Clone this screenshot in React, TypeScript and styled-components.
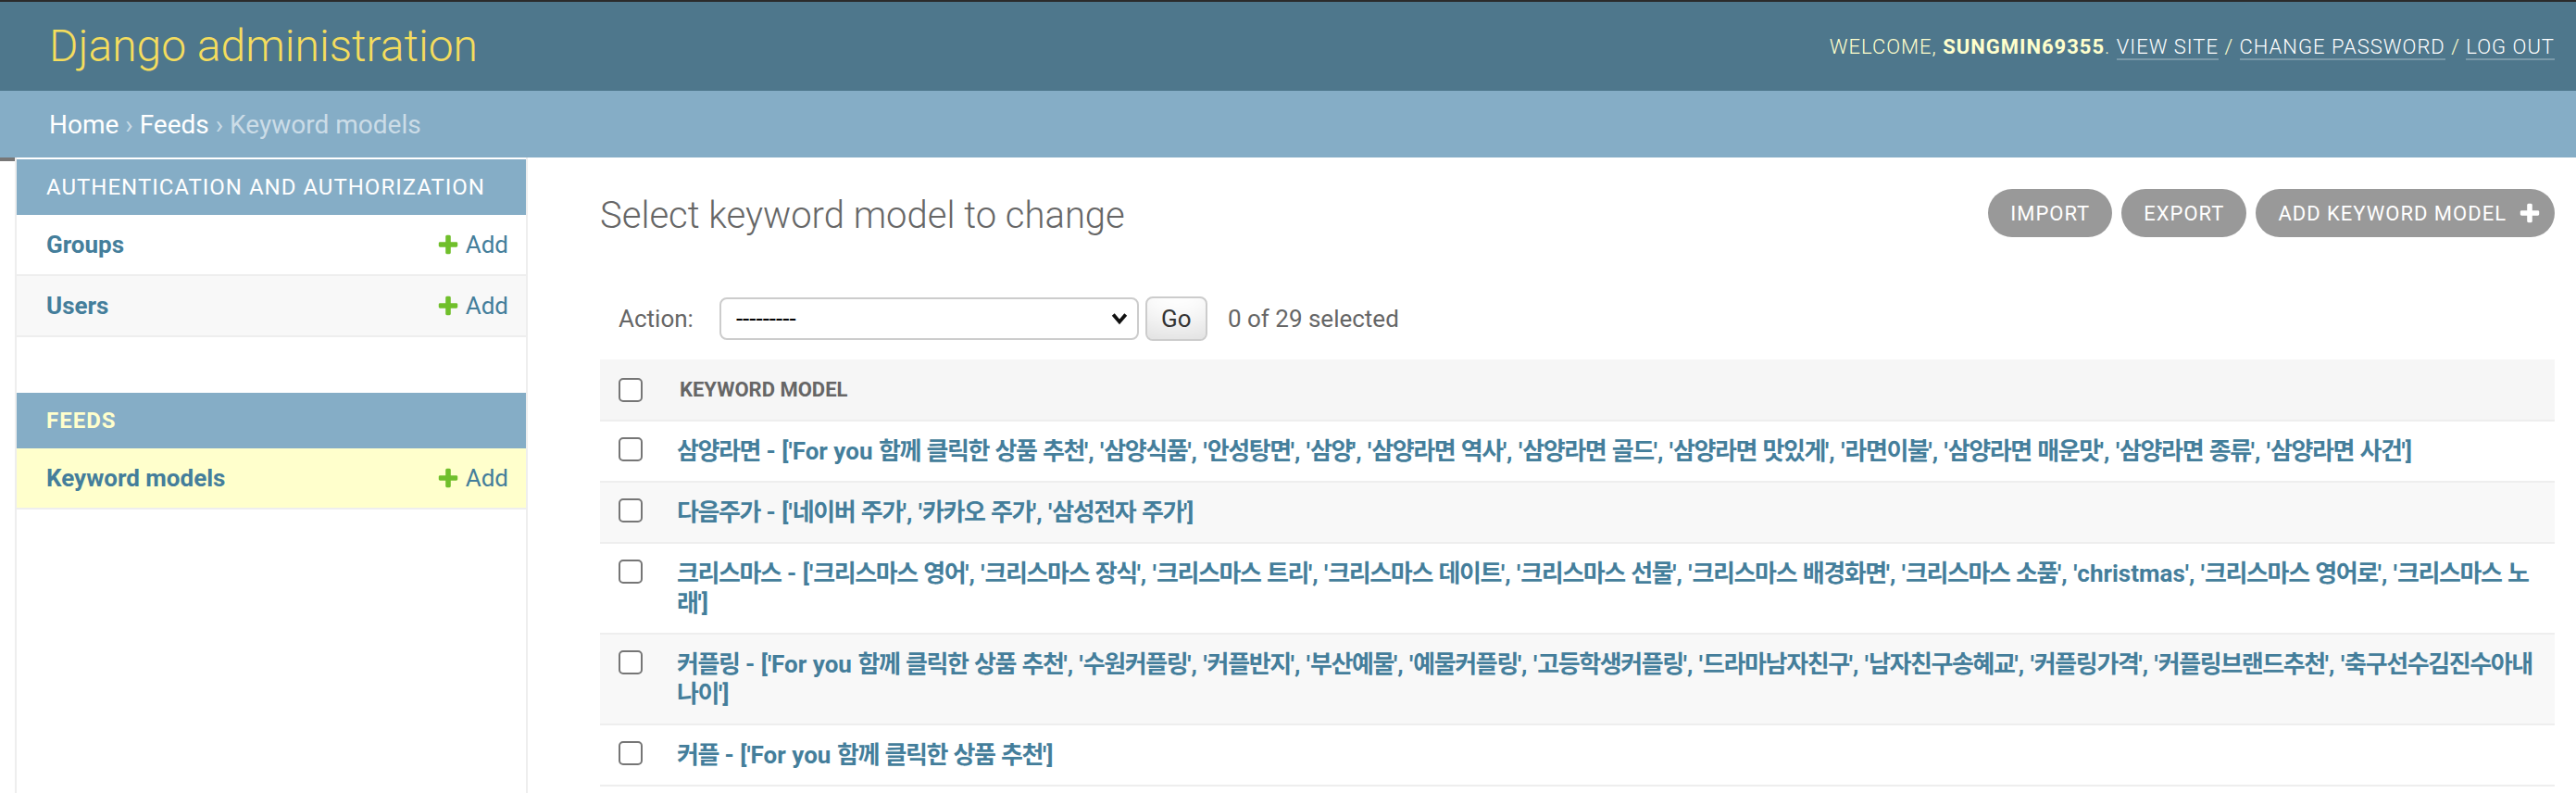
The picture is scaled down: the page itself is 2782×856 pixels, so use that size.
import styled, { createGlobalStyle } from 'styled-components'

const GlobalStyle = createGlobalStyle`
  html, body {
    margin: 0;
    padding: 0;
    background: #fff;
  }

  body {
    color: #333;
    font-family: Roboto, "Noto Sans CJK KR", "DejaVu Sans", sans-serif;
    font-size: 28px;
  }

  a {
    text-decoration: none;
  }
`

const colors = {
  header: '#4e778c',
  primary: '#85adc6',
  accent: '#f5dd5d',
  link: '#447e9b',
  quiet: '#666',
  hairline: '#eeeeee',
  row2: '#f8f8f8',
  selected: '#ffffcc',
  green: '#70bf2b',
}

const TopEdge = styled.div`
  background: #2b2b2b;
  height: 2px;
`

const Header = styled.header`
  align-items: center;
  background: ${colors.header};
  box-sizing: border-box;
  display: flex;
  height: 96px;
  justify-content: space-between;
  padding: 0 23px 0 53px;
`

const SiteName = styled.h1`
  color: ${colors.accent};
  font-size: 48px;
  font-weight: 300;
  line-height: 1;
  margin: 0;
`

const UserTools = styled.div`
  color: #ffc;
  font-size: 22px;
  font-weight: 300;
  letter-spacing: 1px;
  text-transform: uppercase;

  strong {
    font-weight: 700;
  }
`

const ToolLink = styled.a`
  border-bottom: 2px solid rgba(255, 255, 255, 0.25);
  color: #fff;
`

const Breadcrumbs = styled.nav`
  align-items: center;
  background: ${colors.primary};
  box-sizing: border-box;
  color: #cbdce7;
  display: flex;
  font-size: 28px;
  height: 72px;
  padding: 0 53px;
  white-space: pre;

  a {
    color: #fff;
  }
`

const Main = styled.div`
  display: flex;
  min-height: 700px;
`

const SidebarToggle = styled.div`
  border-right: 2px solid ${colors.hairline};
  box-shadow: inset 0 4px 0 #777;
  flex: 0 0 16px;
`

const Sidebar = styled.nav`
  border-right: 2px solid ${colors.hairline};
  flex: 0 0 550px;
  min-width: 0;
  overflow: hidden;
  padding-top: 2px;
`

const Module = styled.section`
  margin-bottom: 60px;
`

const Caption = styled.div<{ $current?: boolean }>`
  align-items: center;
  background: ${colors.primary};
  box-sizing: border-box;
  color: ${({ $current }) => ($current ? '#ffc' : '#fff')};
  display: flex;
  font-size: 24px;
  font-weight: ${({ $current }) => ($current ? 700 : 400)};
  height: 60px;
  letter-spacing: 1px;
  padding: 0 32px;
  text-transform: uppercase;
  white-space: nowrap;
`

const SidebarRow = styled.div<{ $bg: string }>`
  align-items: center;
  background: ${({ $bg }) => $bg};
  border-bottom: 2px solid ${colors.hairline};
  display: flex;
  height: 64px;
  justify-content: space-between;
  padding: 0 19px 0 32px;
`

const ModelLink = styled.a`
  color: ${colors.link};
  font-size: 26px;
  font-weight: 700;
`

const AddLink = styled.a`
  align-items: center;
  color: ${colors.link};
  display: flex;
  font-size: 26px;
  gap: 6px;
`

const Content = styled.main`
  flex: 1;
  min-width: 0;
  padding: 34px 23px 0 78px;
`

const TitleRow = styled.div`
  align-items: center;
  display: flex;
  height: 52px;
  justify-content: space-between;
  margin-bottom: 44px;
`

const Title = styled.h1`
  color: ${colors.quiet};
  font-size: 40px;
  font-weight: 300;
  margin: 0 0 -4px 0;
`

const ObjectTools = styled.ul`
  display: flex;
  gap: 10px;
  list-style: none;
  margin: 0;
  padding: 0;
`

const ToolButton = styled.a<{ $add?: boolean }>`
  align-items: center;
  background: #999;
  border-radius: 26px;
  color: #fff;
  display: flex;
  font-size: 22px;
  height: 52px;
  letter-spacing: 1px;
  padding: ${({ $add }) => ($add ? '0 14px 0 24px' : '0 24px')};
  text-transform: uppercase;

  svg {
    margin-left: 12px;
  }
`

const ActionsBar = styled.div`
  align-items: center;
  color: ${colors.quiet};
  display: flex;
  font-size: 26px;
  height: 88px;
  padding: 0 20px;
`

const SelectBox = styled.div`
  align-items: center;
  border: 2px solid #ccc;
  border-radius: 8px;
  box-sizing: border-box;
  color: #000;
  display: flex;
  font-size: 26px;
  height: 46px;
  justify-content: space-between;
  margin-left: 28px;
  padding: 0 10px 0 16px;
  width: 453px;
`

const GoButton = styled.button`
  background: #fff;
  border: 2px solid #ccc;
  border-radius: 8px;
  box-shadow: 0 -30px 40px -20px rgba(0, 0, 0, 0.15) inset;
  color: #333;
  font-family: inherit;
  font-size: 26px;
  height: 48px;
  margin-left: 7px;
  padding: 0;
  width: 67px;
`

const Counter = styled.span`
  margin-left: 22px;
`

const ResultHeader = styled.div`
  align-items: center;
  background: #f6f6f6;
  border-bottom: 2px solid ${colors.hairline};
  display: flex;
  height: 65px;
`

const CheckCell = styled.div<{ $width: number; $top?: number }>`
  flex: 0 0 ${({ $width }) => $width}px;
  padding-top: ${({ $top }) => $top ?? 0}px;
`

const CheckBox = styled.span`
  background: #fff;
  border: 2px solid #767676;
  border-radius: 5px;
  box-sizing: border-box;
  display: block;
  height: 26px;
  margin-left: 20px;
  width: 26px;
`

const ColumnTitle = styled.span`
  color: ${colors.quiet};
  font-size: 22px;
  font-weight: 700;
  text-transform: uppercase;
`

const ResultRow = styled.div<{ $alt: boolean }>`
  align-items: flex-start;
  background: ${({ $alt }) => ($alt ? colors.row2 : '#fff')};
  border-bottom: 2px solid ${colors.hairline};
  display: flex;
  padding: 16px 16px 16px 0;
`

const ResultLink = styled.a`
  color: ${colors.link};
  flex: 1;
  font-size: 26px;
  font-weight: 700;
  line-height: 32px;
`

// Hangul runs are set a little tighter, like the narrower system Korean face
const Hangul = styled.span`
  letter-spacing: -1.4px;
`

const PlusIcon = ({ color, size }: { color: string; size: number }) => (
  <svg height={size} viewBox="0 0 1792 1792" width={size}>
    <path
      d="M1600 796v192q0 40-28 68t-68 28h-416v416q0 40-28 68t-68 28h-192q-40 0-68-28t-28-68v-416h-416q-40 0-68-28t-28-68v-192q0-40 28-68t68-28h416v-416q0-40 28-68t68-28h192q40 0 68 28t28 68v416h416q40 0 68 28t28 68z"
      fill={color}
    />
  </svg>
)

const Chevron = () => (
  <svg height="14" viewBox="0 0 16 12" width="18">
    <path d="M2 2l6 7 6-7" fill="none" stroke="#111" strokeWidth="3.4" />
  </svg>
)

const KeywordText = ({ text }: { text: string }) => (
  <>
    {text.split(/([\uac00-\ud7a3]+)/).map((part, index) =>
      index % 2 ? <Hangul key={index}>{part}</Hangul> : part,
    )}
  </>
)

const sidebarApps = [
  {
    name: 'Authentication and Authorization',
    models: ['Groups', 'Users'],
  },
  {
    name: 'Feeds',
    models: ['Keyword models'],
    current: true,
  },
]

const keywordModels = [
  "삼양라면 - ['For you 함께 클릭한 상품 추천', '삼양식품', '안성탕면', '삼양', '삼양라면 역사', '삼양라면 골드', '삼양라면 맛있게', '라면이불', '삼양라면 매운맛', '삼양라면 종류', '삼양라면 사건']",
  "다음주가 - ['네이버 주가', '카카오 주가', '삼성전자 주가']",
  "크리스마스 - ['크리스마스 영어', '크리스마스 장식', '크리스마스 트리', '크리스마스 데이트', '크리스마스 선물', '크리스마스 배경화면', '크리스마스 소품', 'christmas', '크리스마스 영어로', '크리스마스 노래']",
  "커플링 - ['For you 함께 클릭한 상품 추천', '수원커플링', '커플반지', '부산예물', '예물커플링', '고등학생커플링', '드라마남자친구', '남자친구송혜교', '커플링가격', '커플링브랜드추천', '축구선수김진수아내나이']",
  "커플 - ['For you 함께 클릭한 상품 추천']",
]

export default function App() {
  return (
    <>
      <GlobalStyle />
      <TopEdge />
      <Header>
        <SiteName>Django administration</SiteName>
        <UserTools>
          Welcome, <strong>sungmin69355</strong>. <ToolLink href="#">View site</ToolLink> /{' '}
          <ToolLink href="#">Change password</ToolLink> / <ToolLink href="#">Log out</ToolLink>
        </UserTools>
      </Header>
      <Breadcrumbs>
        <a href="#">Home</a>
        {' › '}
        <a href="#">Feeds</a>
        {' › Keyword models'}
      </Breadcrumbs>
      <Main>
        <SidebarToggle />
        <Sidebar>
          {sidebarApps.map((app) => (
            <Module key={app.name}>
              <Caption $current={app.current}>{app.name}</Caption>
              {app.models.map((model, index) => (
                <SidebarRow
                  $bg={app.current ? colors.selected : index % 2 ? colors.row2 : '#fff'}
                  key={model}
                >
                  <ModelLink href="#">{model}</ModelLink>
                  <AddLink href="#">
                    <PlusIcon color={colors.green} size={26} />
                    Add
                  </AddLink>
                </SidebarRow>
              ))}
            </Module>
          ))}
        </Sidebar>
        <Content>
          <TitleRow>
            <Title>Select keyword model to change</Title>
            <ObjectTools>
              <li>
                <ToolButton href="#">Import</ToolButton>
              </li>
              <li>
                <ToolButton href="#">Export</ToolButton>
              </li>
              <li>
                <ToolButton $add href="#">
                  Add keyword model
                  <PlusIcon color="#fff" size={26} />
                </ToolButton>
              </li>
            </ObjectTools>
          </TitleRow>
          <ActionsBar>
            <span>Action:</span>
            <SelectBox>
              <span>---------</span>
              <Chevron />
            </SelectBox>
            <GoButton>Go</GoButton>
            <Counter>0 of 29 selected</Counter>
          </ActionsBar>
          <ResultHeader>
            <CheckCell $width={86}>
              <CheckBox />
            </CheckCell>
            <ColumnTitle>Keyword model</ColumnTitle>
          </ResultHeader>
          {keywordModels.map((text, index) => (
            <ResultRow $alt={index % 2 === 1} key={text}>
              <CheckCell $top={1} $width={83}>
                <CheckBox />
              </CheckCell>
              <ResultLink href="#">
                <KeywordText text={text} />
              </ResultLink>
            </ResultRow>
          ))}
        </Content>
      </Main>
    </>
  )
}
